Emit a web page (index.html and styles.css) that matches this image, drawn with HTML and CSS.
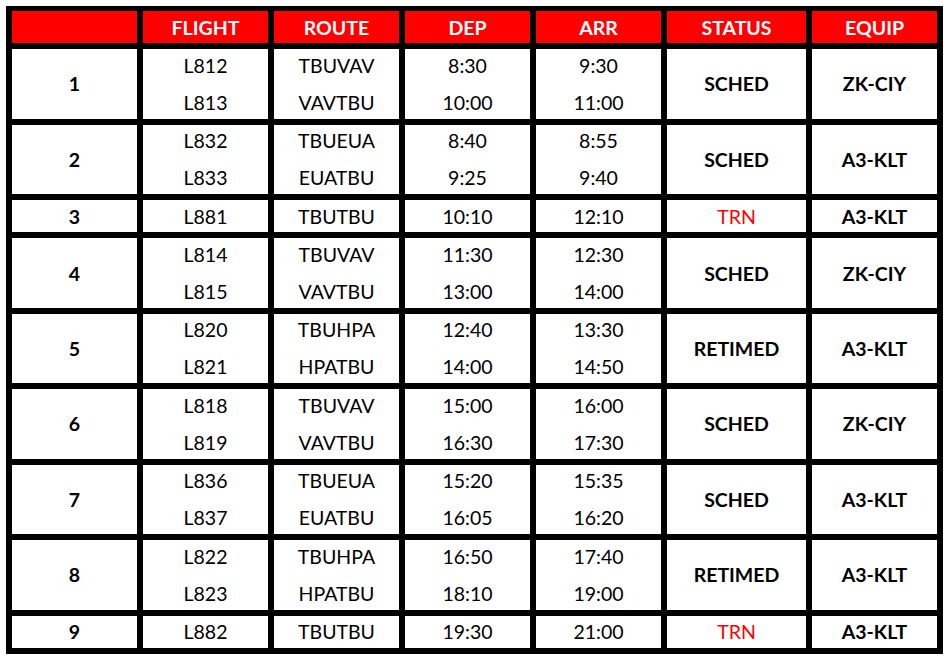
FILE: index.html
```html
<!DOCTYPE html>
<html lang="en">
<head>
<meta charset="utf-8">
<title>Flight schedule</title>
<link rel="stylesheet" href="styles.css">
</head>
<body>
<div class="sheet">
  <div class="hd"></div>
  <div class="hd">FLIGHT</div>
  <div class="hd">ROUTE</div>
  <div class="hd">DEP</div>
  <div class="hd">ARR</div>
  <div class="hd">STATUS</div>
  <div class="hd">EQUIP</div>

  <div class="cell b">1</div>
  <div class="cell two"><span>L812</span><span>L813</span></div>
  <div class="cell two"><span>TBUVAV</span><span>VAVTBU</span></div>
  <div class="cell two"><span>8:30</span><span>10:00</span></div>
  <div class="cell two"><span>9:30</span><span>11:00</span></div>
  <div class="cell b">SCHED</div>
  <div class="cell b">ZK-CIY</div>

  <div class="cell b">2</div>
  <div class="cell two"><span>L832</span><span>L833</span></div>
  <div class="cell two"><span>TBUEUA</span><span>EUATBU</span></div>
  <div class="cell two"><span>8:40</span><span>9:25</span></div>
  <div class="cell two"><span>8:55</span><span>9:40</span></div>
  <div class="cell b">SCHED</div>
  <div class="cell b">A3-KLT</div>

  <div class="cell b">3</div>
  <div class="cell">L881</div>
  <div class="cell">TBUTBU</div>
  <div class="cell">10:10</div>
  <div class="cell">12:10</div>
  <div class="cell red">TRN</div>
  <div class="cell b">A3-KLT</div>

  <div class="cell b">4</div>
  <div class="cell two"><span>L814</span><span>L815</span></div>
  <div class="cell two"><span>TBUVAV</span><span>VAVTBU</span></div>
  <div class="cell two"><span>11:30</span><span>13:00</span></div>
  <div class="cell two"><span>12:30</span><span>14:00</span></div>
  <div class="cell b">SCHED</div>
  <div class="cell b">ZK-CIY</div>

  <div class="cell b">5</div>
  <div class="cell two"><span>L820</span><span>L821</span></div>
  <div class="cell two"><span>TBUHPA</span><span>HPATBU</span></div>
  <div class="cell two"><span>12:40</span><span>14:00</span></div>
  <div class="cell two"><span>13:30</span><span>14:50</span></div>
  <div class="cell b">RETIMED</div>
  <div class="cell b">A3-KLT</div>

  <div class="cell b">6</div>
  <div class="cell two"><span>L818</span><span>L819</span></div>
  <div class="cell two"><span>TBUVAV</span><span>VAVTBU</span></div>
  <div class="cell two"><span>15:00</span><span>16:30</span></div>
  <div class="cell two"><span>16:00</span><span>17:30</span></div>
  <div class="cell b">SCHED</div>
  <div class="cell b">ZK-CIY</div>

  <div class="cell b">7</div>
  <div class="cell two"><span>L836</span><span>L837</span></div>
  <div class="cell two"><span>TBUEUA</span><span>EUATBU</span></div>
  <div class="cell two"><span>15:20</span><span>16:05</span></div>
  <div class="cell two"><span>15:35</span><span>16:20</span></div>
  <div class="cell b">SCHED</div>
  <div class="cell b">A3-KLT</div>

  <div class="cell b">8</div>
  <div class="cell two"><span>L822</span><span>L823</span></div>
  <div class="cell two"><span>TBUHPA</span><span>HPATBU</span></div>
  <div class="cell two"><span>16:50</span><span>18:10</span></div>
  <div class="cell two"><span>17:40</span><span>19:00</span></div>
  <div class="cell b">RETIMED</div>
  <div class="cell b">A3-KLT</div>

  <div class="cell b">9</div>
  <div class="cell">L882</div>
  <div class="cell">TBUTBU</div>
  <div class="cell">19:30</div>
  <div class="cell">21:00</div>
  <div class="cell red">TRN</div>
  <div class="cell b">A3-KLT</div>
</div>
</body>
</html>
```
FILE: styles.css
```css
html, body {
  margin: 0;
  padding: 0;
  background: #ffffff;
}

body {
  padding: 6px 0 0 6px;
  font-family: Lato, "Open Sans", sans-serif;
  font-size: 19.5px;
  color: #000;
}

.sheet {
  display: inline-grid;
  background: #000;
  padding: 5px 6px 5.8px 6px;
  grid-template-columns: 125px 125px 125px 125px 125px 139px 125px;
  grid-template-rows: 32.3px 69.7px 69.7px 32.3px 69.7px 69.7px 69.7px 69.7px 69.7px 32.3px;
  column-gap: 6px;
  row-gap: 5.8px;
}

.hd,
.cell {
  display: flex;
  align-items: center;
  justify-content: center;
  background: #fff;
  text-align: center;
}

.hd {
  background: #ff0000;
  color: #fff;
  font-weight: 700;
}

.two {
  flex-direction: column;
  justify-content: center;
  gap: 14px;
}

.two span {
  display: block;
  line-height: 23px;
}

.b {
  font-weight: 700;
}

.red {
  color: #ff0000;
}
```
